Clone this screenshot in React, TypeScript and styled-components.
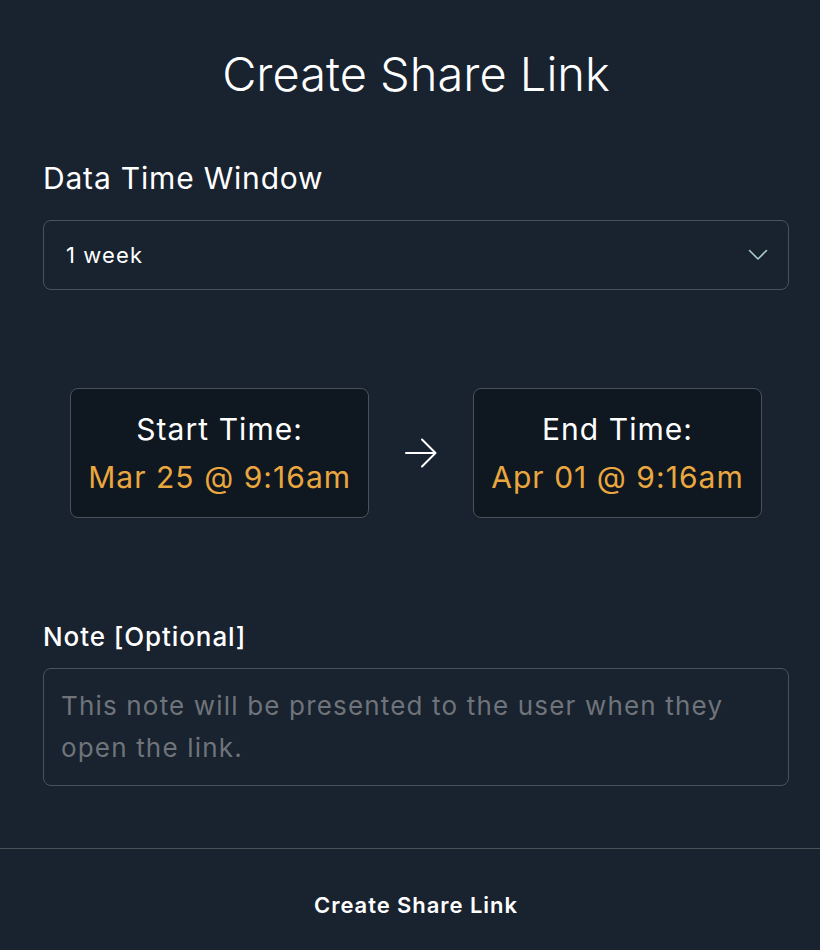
import styled, { createGlobalStyle } from "styled-components";

const GlobalStyle = createGlobalStyle`
  html, body {
    margin: 0;
    padding: 0;
    background: #19222f;
    overflow: hidden;
  }
  * {
    box-sizing: border-box;
  }
`;

function ArrowIcon() {
  return (
    <svg width="32" height="30" viewBox="0 0 32 30" fill="none">
      <path
        d="M1 15H30.5M17 1.5L30.5 15L17 28.5"
        stroke="#ffffff"
        strokeWidth="2"
        strokeLinecap="round"
        strokeLinejoin="round"
      />
    </svg>
  );
}

function ChevronIcon() {
  return (
    <svg width="20" height="12" viewBox="0 0 20 12" fill="none">
      <path
        d="M1.5 1.5L10 10L18.5 1.5"
        stroke="#a9cbc8"
        strokeWidth="1.6"
        strokeLinecap="round"
        strokeLinejoin="round"
      />
    </svg>
  );
}

function TimeCard({ label, value }: { label: string; value: string }) {
  return (
    <Card>
      <CardLabel>{label}</CardLabel>
      <CardValue>{value}</CardValue>
    </Card>
  );
}

export default function App() {
  return (
    <Modal>
      <GlobalStyle />
      <Body>
        <Title>Create Share Link</Title>
        <FieldLabel>Data Time Window</FieldLabel>
        <SelectTrigger type="button">
          <span>1 week</span>
          <ChevronIcon />
        </SelectTrigger>
        <TimeRow>
          <TimeCard label="Start Time:" value="Mar 25 @ 9:16am" />
          <ArrowIcon />
          <TimeCard label="End Time:" value="Apr 01 @ 9:16am" />
        </TimeRow>
        <NoteLabel>Note [Optional]</NoteLabel>
        <NoteArea placeholder="This note will be presented to the user when they open the link." />
      </Body>
      <Footer>
        <SubmitButton type="button">Create Share Link</SubmitButton>
      </Footer>
    </Modal>
  );
}

const Modal = styled.div`
  width: 832px;
  min-height: 950px;
  background: #19222f;
  color: #ffffff;
  font-family: Inter, "Noto Sans", sans-serif;
  letter-spacing: 0.03em;
  display: flex;
  flex-direction: column;
`;

const Body = styled.div`
  padding: 45px 43px 0;
  display: flex;
  flex-direction: column;
`;

const Title = styled.h1`
  margin: 0;
  font-size: 47px;
  line-height: 58px;
  font-weight: 300;
  letter-spacing: 0;
  text-align: center;
`;

const FieldLabel = styled.div`
  margin-top: 57px;
  font-size: 30px;
  line-height: 36px;
  font-weight: 400;
  letter-spacing: 0.027em;
`;

const SelectTrigger = styled.button`
  margin-top: 24px;
  height: 70px;
  width: 100%;
  display: flex;
  align-items: center;
  justify-content: space-between;
  padding: 0 20px 0 22px;
  background: transparent;
  border: 1.5px solid #4b525d;
  border-radius: 8px;
  color: #ffffff;
  font-family: inherit;
  font-size: 22px;
  letter-spacing: 0.05em;
  text-align: left;
`;

const TimeRow = styled.div`
  margin-top: 98px;
  display: flex;
  align-items: center;
  justify-content: center;
  gap: 36px;
`;

const Card = styled.div`
  padding: 16px 17px;
  background: #0f1720;
  border: 1.5px solid #4b5159;
  border-radius: 8px;
  text-align: center;
  font-size: 30px;
  line-height: 48px;
  letter-spacing: 0.035em;
`;

const CardLabel = styled.div`
  color: #ffffff;
`;

const CardValue = styled.div`
  color: #eba73f;
  white-space: nowrap;
`;

const NoteLabel = styled.div`
  margin-top: 103px;
  font-size: 26px;
  line-height: 32px;
  font-weight: 500;
  letter-spacing: 0.035em;
`;

const NoteArea = styled.textarea`
  margin-top: 15px;
  height: 118px;
  width: 100%;
  padding: 16px 17px;
  background: transparent;
  border: 1.5px solid #4b525d;
  border-radius: 8px;
  color: #ffffff;
  font-family: inherit;
  font-size: 26px;
  line-height: 42px;
  letter-spacing: 0.045em;
  resize: none;
  outline: none;

  &::placeholder {
    color: #6f747a;
  }
`;

const Footer = styled.div`
  margin-top: 62px;
  border-top: 1.5px solid #4b5159;
  display: flex;
  justify-content: center;
`;

const SubmitButton = styled.button`
  height: 112px;
  width: 100%;
  background: transparent;
  border: none;
  color: #ffffff;
  font-family: inherit;
  font-size: 22px;
  font-weight: 600;
  letter-spacing: 0.043em;
  padding: 0;
`;
